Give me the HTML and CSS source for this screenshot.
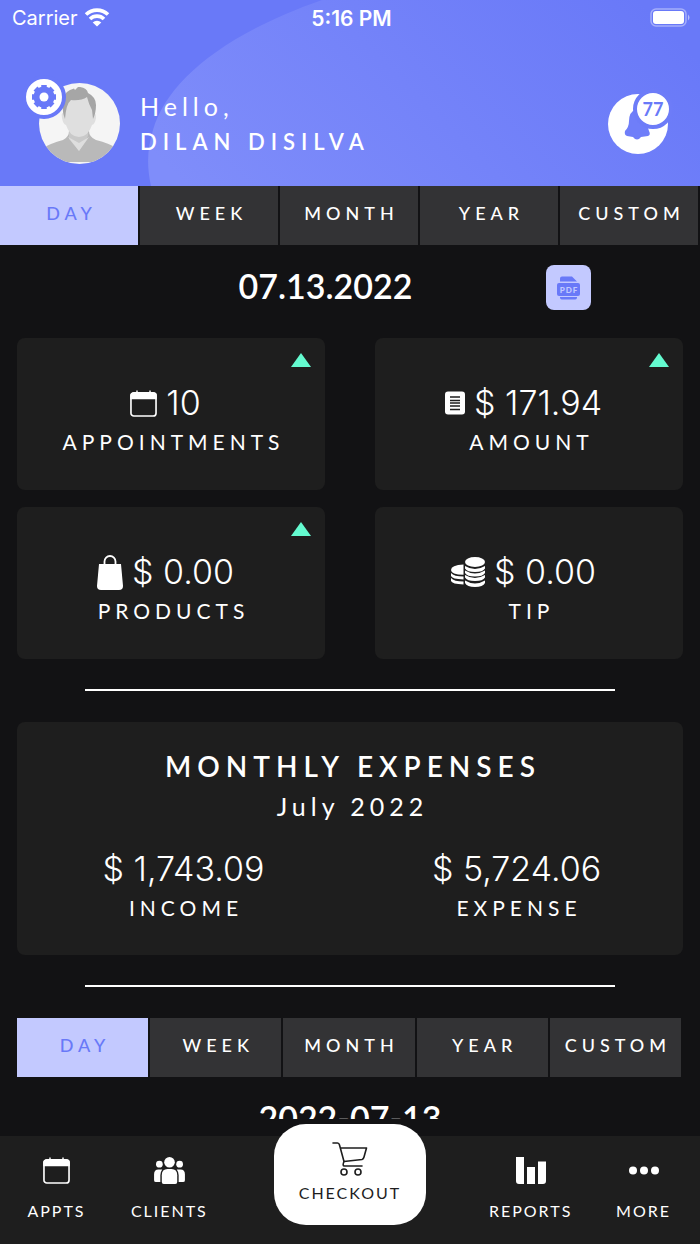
FILE: index.html
```html
<!DOCTYPE html>
<html lang="en">
<head>
    <meta charset="UTF-8">
    <meta name="viewport" content="width=device-width, initial-scale=1.0">
    <title>Dashboard</title>
    <link rel="stylesheet" href="styles.css">
</head>
<body>
    <!-- Shared icons -->
    <svg class="sprite" aria-hidden="true">
        <symbol id="calendar" viewBox="0 0 28 28">
            <rect x="1" y="3" width="26" height="24" rx="3" fill="none" stroke="currentColor" stroke-width="1.700"/>
            <path d="M.2 9.500V5.500a3 3 0 0 1 3-3H6.500V.5h1.500v2h12v-2h1.500v2h3.300a3 3 0 0 1 3 3v4z" fill="currentColor"/>
        </symbol>
        <symbol id="up" viewBox="0 0 20 14">
            <path d="M10 0l10 14H0z" fill="currentColor"/>
        </symbol>
    </svg>

    <header class="header">
        <svg class="header-arc" viewBox="0 0 700 186" preserveAspectRatio="none" aria-hidden="true">
            <defs>
                <linearGradient id="arcFill" gradientUnits="userSpaceOnUse" x1="240" y1="240" x2="560" y2="-80">
                    <stop offset="0" stop-color="#7f8dfa"/>
                    <stop offset="1" stop-color="#6979f8"/>
                </linearGradient>
            </defs>
            <path d="M151 186C146 163 148 147 153 130C167 82 222 35 322 0H700V186z" fill="url(#arcFill)"/>
        </svg>

        <div class="status">
            <div class="carrier">
                <span>Carrier</span>
                <svg width="26" height="20" viewBox="0 0 26 20" aria-hidden="true">
                    <path d="M2 6.500A16 16 0 0 1 24 6.500M6 11A10 10 0 0 1 20 11" fill="none" stroke="#fff" stroke-width="3.600"/>
                    <path d="M8.700 14.500a6 6 0 0 1 8.600 0L13 18.500z" fill="#fff"/>
                </svg>
            </div>
            <span class="clock">5:16 PM</span>
            <svg class="battery" width="41" height="20" viewBox="0 0 41 20" aria-hidden="true">
                <rect x="1" y="1" width="35" height="17" rx="5" fill="none" stroke="#fff" stroke-opacity=".4" stroke-width="1.500"/>
                <rect x="3" y="3" width="31" height="13" rx="3" fill="#fff"/>
                <path d="M38 6.500q3 3 0 6z" fill="#fff" fill-opacity=".5"/>
            </svg>
        </div>

        <div class="profile">
            <div class="avatar">
                <svg width="81" height="81" viewBox="0 0 81 81" aria-hidden="true">
                    <clipPath id="face"><circle cx="40.500" cy="40.500" r="40.500"/></clipPath>
                    <g clip-path="url(#face)">
                        <rect width="81" height="81" fill="#f5f5f5"/>
                        <path d="M0 67Q12 60 24 57Q30 54 30 48H50Q50 54 57 57Q70 60 81 67V79H0z" fill="#b9b9b9"/>
                        <path d="M30 48H49V53L40 68L30 56z" fill="#c9c9c9"/>
                        <path d="M29 54L40 60L50 54L40 68z" fill="#dedede"/>
                        <path d="M24 30Q22 30 23 35Q24 41 27 42Q31 54 40 54Q49 54 53 42Q56 41 57 35Q57 30 55 30L52 14H27z" fill="#dfdfdf"/>
                        <path d="M26 36Q23 29 24 20Q24 10 31 7L35 5.500L36 7L39 4L41 4Q48 5 49 10Q57 14 57 22Q57 30 54 36L53 27Q50 22 48 14Q42 18 32 17Q27 21 26 36z" fill="#a6a6a6"/>
                    </g>
                </svg>
                <button class="gear" aria-label="Settings">
                    <svg width="26" height="26" viewBox="0 0 26 26" aria-hidden="true">
                        <circle cx="13" cy="13" r="10.500" fill="#6979f8"/>
                        <path d="M13 1v24M1 13h24M4.500 4.500l17 17M21.500 4.500l-17 17" stroke="#6979f8" stroke-width="5.500"/>
                        <circle cx="13" cy="13" r="4.500" fill="#fff"/>
                    </svg>
                </button>
            </div>
            <div class="greeting">
                <span class="hello">Hello,</span>
                <h1>DILAN DISILVA</h1>
            </div>
            <button class="bell" aria-label="Notifications">
                <svg width="60" height="60" viewBox="0 0 60 60" aria-hidden="true">
                    <circle cx="30" cy="30" r="30" fill="#fff"/>
                    <path d="M28 15Q21 18 21 27Q21 33 17 37Q16 41 19 42L25 43Q29 48 33 43L40 42Q43 41 41 37L38 28z" fill="#6f7ef9"/>
                </svg>
                <span class="count">77</span>
            </button>
        </div>
    </header>

    <main class="content">
        <div class="tabs">
            <button class="tab active">DAY</button>
            <button class="tab">WEEK</button>
            <button class="tab">MONTH</button>
            <button class="tab">YEAR</button>
            <button class="tab">CUSTOM</button>
        </div>

        <div class="date-row">
            <h2 class="date">07.13.2022</h2>
            <button class="pdf" aria-label="Export PDF">
                <svg width="23" height="24" viewBox="0 0 23 24" aria-hidden="true">
                    <path d="M3 5.500V2.500Q3 .5 5 .5H15L20 5.500zM3 21H20V22Q19.500 23.500 18 23.500H5Q3.500 23.500 3 22z" fill="#6979f8"/>
                    <rect y="7" width="23" height="13" rx="2" fill="#6979f8"/>
                    <text x="12" y="16.500" text-anchor="middle" class="pdf-text">PDF</text>
                </svg>
            </button>
        </div>

        <div class="cards">
            <section class="card">
                <svg class="trend" width="20" height="14"><use href="#up"/></svg>
                <div class="value">
                    <svg width="27" height="27" aria-hidden="true"><use href="#calendar"/></svg>
                    <span>10</span>
                </div>
                <div class="label">APPOINTMENTS</div>
            </section>
            <section class="card">
                <svg class="trend" width="20" height="14"><use href="#up"/></svg>
                <div class="value">
                    <svg width="20" height="24" viewBox="0 0 20 24" aria-hidden="true">
                        <rect width="20" height="23" y=".5" rx="3" fill="#fff"/>
                        <path d="M5 6h10M5 9.500h10M5 12h10M5 15h10M5 18.500h10" stroke="#1e1e1e" stroke-width="1.500"/>
                    </svg>
                    <span>$ 171.94</span>
                </div>
                <div class="label">AMOUNT</div>
            </section>
            <section class="card">
                <svg class="trend" width="20" height="14"><use href="#up"/></svg>
                <div class="value">
                    <svg width="26" height="35" viewBox="0 0 26 35" aria-hidden="true">
                        <path d="M2 9H24L26 31Q26 35 22 35H4Q0 35 0 31z" fill="#fff"/>
                        <path d="M7.500 11V6.500a5.500 5.500 0 0 1 11 0V11" fill="none" stroke="#fff" stroke-width="1.800"/>
                    </svg>
                    <span>$ 0.00</span>
                </div>
                <div class="label">PRODUCTS</div>
            </section>
            <section class="card">
                <div class="value">
                    <svg width="34" height="30" viewBox="0 0 34 30" aria-hidden="true">
                        <ellipse cx="24" cy="5" rx="10" ry="5" fill="#fff"/>
                        <path d="M12.500 7.500Q0 8 0 13Q0 17.500 12.500 17.800z" fill="#fff"/>
                        <path d="M14 9Q24 15 34 9V11.500Q32 15 24 15Q16 15 14 11.500zM14 13.500Q24 19.500 34 13.500V16Q32 19.500 24 19.500Q16 19.500 14 16zM14 18Q24 24 34 18V20.500Q32 24 24 24Q16 24 14 20.500zM14 23.500Q24 29.500 34 23.500V26Q32 30 24 30Q16 30 14 26z" fill="#fff"/>
                        <path d="M0 16Q3 19.500 12.500 19.500V22.500Q1 22 0 19zM0 21Q3 24.500 12.500 24.500V27.500Q1 27 0 24z" fill="#fff"/>
                    </svg>
                    <span>$ 0.00</span>
                </div>
                <div class="label">TIP</div>
            </section>
        </div>

        <hr>

        <section class="expenses">
            <h2>MONTHLY EXPENSES</h2>
            <p class="month">July 2022</p>
            <div class="totals">
                <div>
                    <div class="amount">$ 1,743.09</div>
                    <div class="label">INCOME</div>
                </div>
                <div>
                    <div class="amount">$ 5,724.06</div>
                    <div class="label">EXPENSE</div>
                </div>
            </div>
        </section>

        <hr>

        <div class="tabs tabs-inset">
            <button class="tab active">DAY</button>
            <button class="tab">WEEK</button>
            <button class="tab">MONTH</button>
            <button class="tab">YEAR</button>
            <button class="tab">CUSTOM</button>
        </div>
        <h2 class="date date-next">2022-07-13</h2>
    </main>

    <nav class="nav">
        <a class="nav-item" href="#">
            <svg width="27" height="27" aria-hidden="true"><use href="#calendar"/></svg>
            <span>APPTS</span>
        </a>
        <a class="nav-item" href="#">
            <svg width="31" height="27" viewBox="0 0 32 28" aria-hidden="true">
                <g fill="#fff">
                    <circle cx="16" cy="5.500" r="5.500"/>
                    <circle cx="5.500" cy="7.500" r="3.500"/>
                    <circle cx="26.500" cy="7.500" r="3.500"/>
                    <path d="M8 26V19Q8 12.500 14 12.500H18Q24 12.500 24 19V26Q24 28 22 28H10Q8 28 8 26z"/>
                    <path d="M8.500 13Q6.500 15.500 6.500 19V26H2Q0 26 0 24V18Q0 13 4.500 13zM23.500 13Q25.500 15.500 25.500 19V26H30Q32 26 32 24V18Q32 13 27.500 13z"/>
                </g>
            </svg>
            <span>CLIENTS</span>
        </a>
        <a class="nav-item checkout" href="#">
            <svg width="36" height="34" viewBox="0 0 36 34" aria-hidden="true">
                <g fill="none" stroke="#1e1e1e" stroke-width="1.600" stroke-linejoin="round" stroke-linecap="round">
                    <path d="M1 1H5.500Q7 1 7.500 3L12 19.500L30 17.500Q31.500 17 32 15L34.500 6H8.500"/>
                    <path d="M12 19.500Q10 24 12.500 24H30"/>
                    <circle cx="12" cy="30" r="3"/>
                    <circle cx="26" cy="30" r="3"/>
                </g>
            </svg>
            <span>CHECKOUT</span>
        </a>
        <a class="nav-item" href="#">
            <svg width="30" height="27" viewBox="0 0 30 27" aria-hidden="true">
                <path d="M0 0H8V27H3Q0 27 0 24zM11 10H19V27H11zM22 4.500H30V24Q30 27 27 27H22z" fill="#fff"/>
            </svg>
            <span>REPORTS</span>
        </a>
        <a class="nav-item" href="#">
            <svg width="30" height="27" viewBox="0 0 30 27" aria-hidden="true">
                <g fill="#fff">
                    <circle cx="4" cy="13.500" r="4"/>
                    <circle cx="15" cy="13.500" r="4"/>
                    <circle cx="26" cy="13.500" r="4"/>
                </g>
            </svg>
            <span>MORE</span>
        </a>
    </nav>
</body>
</html>
```
FILE: styles.css
```css
* {
    box-sizing: border-box;
}

body {
    margin: 0;
    height: 100vh;
    display: flex;
    flex-direction: column;
    background-color: #121214;
    color: #fff;
    font-family: Lato, sans-serif;
}

h1,
h2,
p {
    margin: 0;
}

button {
    border: none;
    padding: 0;
    font-family: inherit;
    color: inherit;
    cursor: pointer;
}

svg {
    display: block;
    flex-shrink: 0;
}

.sprite {
    position: absolute;
    width: 0;
    height: 0;
}

/* Header */
.header {
    position: relative;
    flex-shrink: 0;
    background-color: #6979f8;
}

.header-arc {
    position: absolute;
    inset: 0;
    width: 100%;
    height: 100%;
}

.status {
    position: relative;
    display: grid;
    grid-template-columns: 1fr auto 1fr;
    align-items: center;
    height: 36px;
    padding: 0 9px 0 12px;
    font-family: Inter, sans-serif;
    font-size: 20px;
}

.carrier {
    display: flex;
    align-items: center;
    gap: 6px;
}

.clock {
    font-size: 21px;
    font-weight: 600;
}

.battery {
    justify-self: end;
}

.profile {
    position: relative;
    display: flex;
    align-items: center;
    padding: 47px 32px 22px 39px;
}

.avatar {
    position: relative;
}

.gear {
    position: absolute;
    top: -8px;
    left: -17px;
    width: 44px;
    height: 44px;
    display: grid;
    place-items: center;
    border: 4px solid #6979f8;
    border-radius: 50%;
    background-color: #fff;
}

.greeting {
    flex: 1;
    padding-left: 20px;
}

.hello {
    display: block;
    font-size: 25px;
    line-height: 36px;
    letter-spacing: 5px;
}

h1 {
    font-size: 22px;
    font-weight: 600;
    line-height: 36px;
    letter-spacing: 6px;
}

.bell {
    position: relative;
    background: none;
}

.count {
    position: absolute;
    top: -5px;
    right: -5px;
    width: 40px;
    height: 40px;
    border: 4px solid #6d7cf8;
    border-radius: 50%;
    background-color: #fff;
    color: #6979f8;
    font-size: 18px;
    font-weight: bold;
    line-height: 32px;
}

/* Main area, cut off above the bottom bar */
.content {
    flex: 1;
    min-height: 0;
    overflow: hidden;
}

.tabs {
    display: grid;
    grid-template-columns: repeat(5, 1fr);
    gap: 2px;
    padding-right: 2px;
}

.tabs-inset {
    margin: 0 17px;
}

.tab {
    height: 59px;
    padding-bottom: 5px;
    background-color: #333335;
    font-size: 18px;
    font-weight: 500;
    letter-spacing: 5px;
    text-indent: 5px;
}

.tab.active {
    background-color: #c3c9ff;
    color: #6979f8;
}

.date-row {
    display: flex;
    align-items: center;
    padding: 20px 109px 28px 105px;
}

.date {
    flex: 1;
    padding-bottom: 3px;
    font-size: 34px;
    font-weight: 600;
    line-height: 42px;
    text-align: center;
}

.date-next {
    padding-top: 20px;
}

.pdf {
    width: 45px;
    height: 45px;
    display: grid;
    place-items: center;
    border-radius: 8px;
    background-color: #c3c9ff;
}

.pdf-text {
    fill: #c3c9ff;
    font-size: 8px;
    font-weight: 900;
    letter-spacing: 1px;
}

.cards {
    display: grid;
    grid-template-columns: 1fr 1fr;
    gap: 17px 50px;
    padding: 0 17px;
}

.card {
    position: relative;
    height: 152px;
    padding-top: 42px;
    border-radius: 8px;
    background-color: #1e1e1e;
}

.trend {
    position: absolute;
    top: 15px;
    right: 14px;
    color: #64fbd0;
}

.value {
    display: flex;
    justify-content: center;
    align-items: center;
    gap: 9px;
    padding-right: 11px;
}

.value,
.amount {
    font-family: Inter, sans-serif;
    font-size: 34px;
    font-weight: 300;
    line-height: 46px;
}

.label {
    font-size: 21px;
    line-height: 32px;
    letter-spacing: 5px;
    text-indent: 5px;
    text-align: center;
}

hr {
    height: 2px;
    margin: 30px 85px 31px;
    border: none;
    background-color: #fff;
}

.expenses {
    margin: 0 17px;
    padding: 23px 0 31px;
    border-radius: 8px;
    background-color: #1e1e1e;
    text-align: center;
}

.expenses h2 {
    font-size: 28px;
    font-weight: 600;
    line-height: 42px;
    letter-spacing: 6px;
    text-indent: 6px;
}

.month {
    font-size: 25px;
    line-height: 38px;
    letter-spacing: 5px;
    text-indent: 5px;
}

.totals {
    display: grid;
    grid-template-columns: 1fr 1fr;
    padding-top: 21px;
}

/* Bottom bar */
.nav {
    flex-shrink: 0;
    display: grid;
    grid-template-columns: 1fr 1fr 2.2fr 1fr 1fr;
    height: 108px;
    margin-top: 17px;
    background-color: #1e1e1e;
}

.nav-item {
    display: flex;
    flex-direction: column;
    align-items: center;
    gap: 15px;
    padding-top: 21px;
    color: #fff;
    font-size: 16px;
    line-height: 24px;
    letter-spacing: 2px;
    text-decoration: none;
}

.checkout {
    justify-self: center;
    width: 152px;
    height: 101px;
    margin-top: -12px;
    padding-top: 18px;
    gap: 5px;
    border-radius: 32px;
    background-color: #fff;
    color: #1e1e1e;
}
```
